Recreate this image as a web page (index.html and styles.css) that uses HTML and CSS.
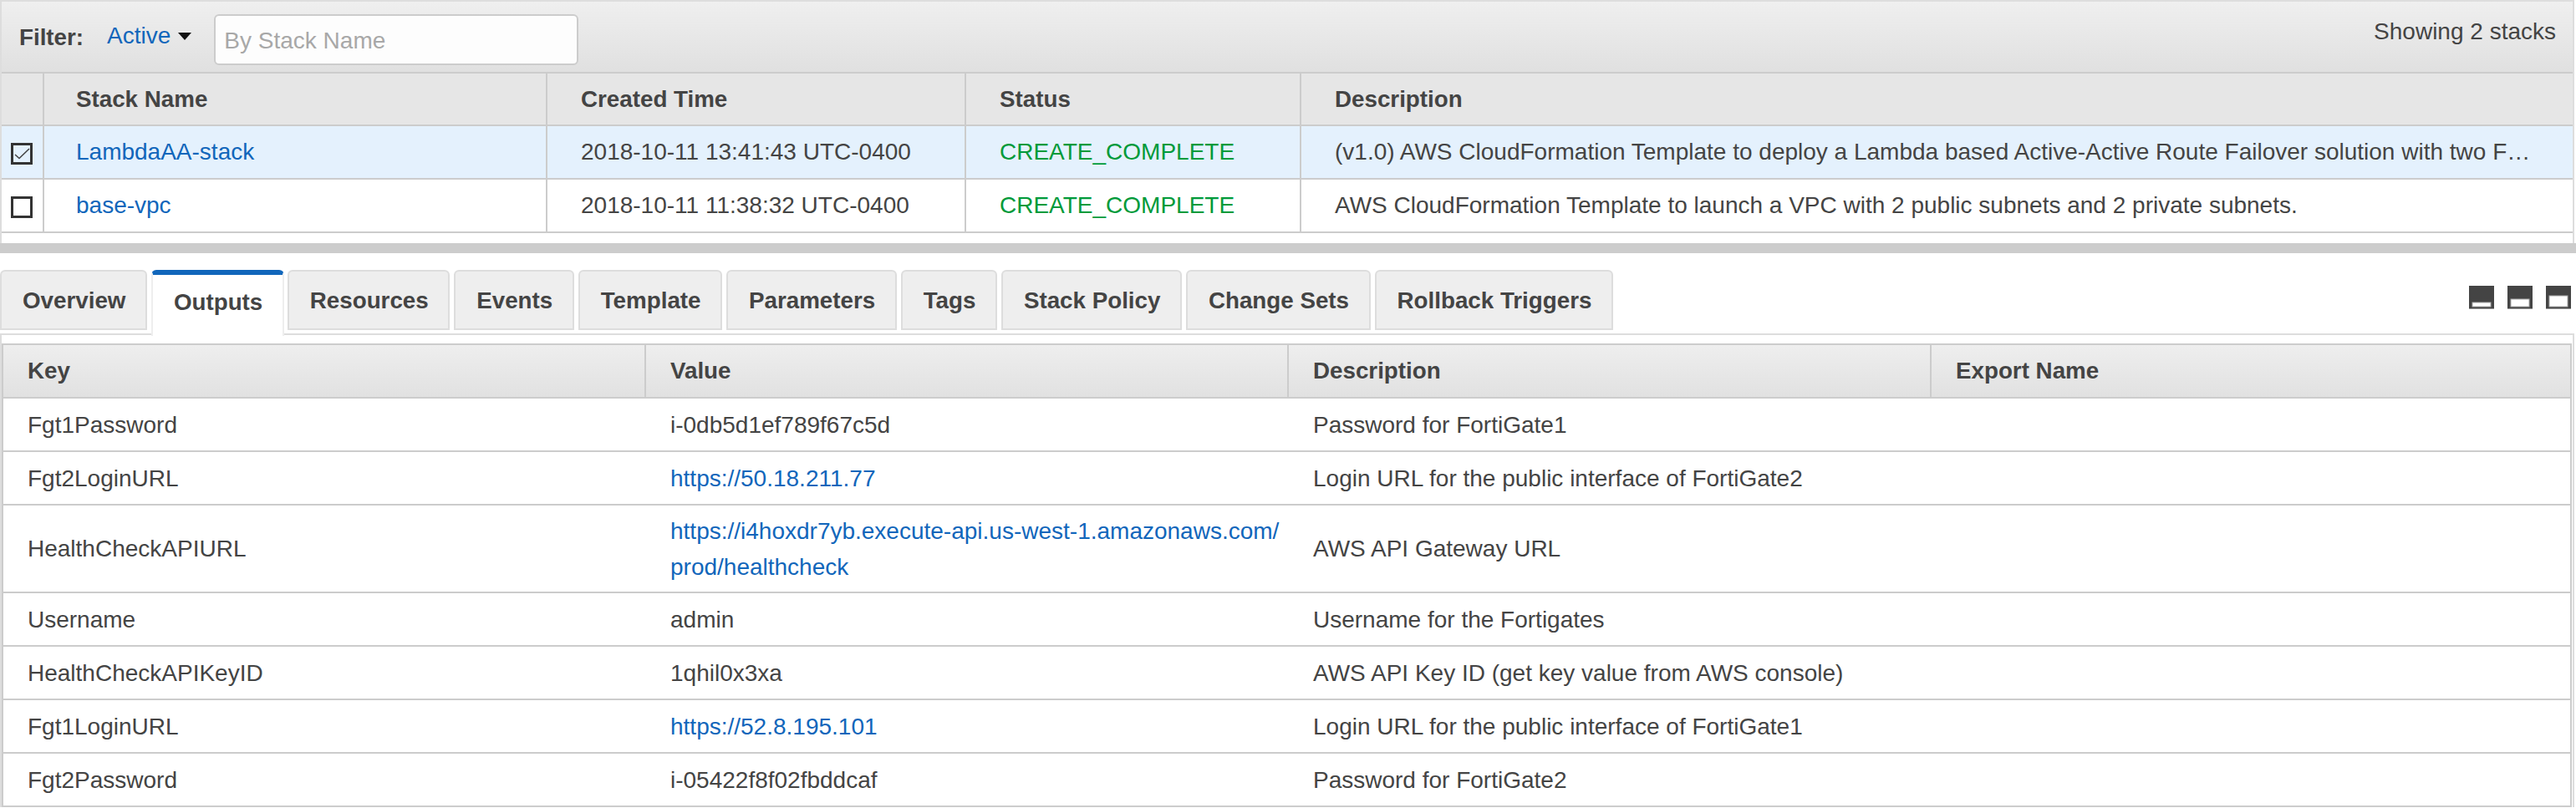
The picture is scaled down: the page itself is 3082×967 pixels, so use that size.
FILE: index.html
```html
<!DOCTYPE html>
<html>
<head>
<meta charset="utf-8" />
<title>Stacks</title>
<link rel="stylesheet" href="styles.css">
</head>
<body>

<div class="stacks">
  <div class="filter-bar">
    <span class="filter-label">Filter:</span>
    <a class="filter-select" href="#">Active<span class="caret"></span></a>
    <input class="filter-input" type="text" placeholder="By Stack Name">
    <span class="filter-count">Showing 2 stacks</span>
  </div>
  <table class="stack-table">
    <colgroup>
      <col class="c-check"><col class="c-name"><col class="c-time"><col class="c-status"><col>
    </colgroup>
    <thead>
      <tr><th></th><th class="name-cell">Stack Name</th><th>Created Time</th><th>Status</th><th>Description</th></tr>
    </thead>
    <tbody>
      <tr class="selected">
        <td class="check-cell">
          <span class="checkbox"><svg viewBox="0 0 20 20" width="20" height="20"><path d="M2 11 L7 15.5 L19 4" fill="none" stroke="#444" stroke-width="1.6"/></svg></span>
        </td>
        <td class="name-cell"><a href="#">LambdaAA-stack</a></td>
        <td>2018-10-11 13:41:43 UTC-0400</td>
        <td class="ok">CREATE_COMPLETE</td>
        <td>(v1.0) AWS CloudFormation Template to deploy a Lambda based Active-Active Route Failover solution with two FortiGate instances</td>
      </tr>
      <tr>
        <td class="check-cell"><span class="checkbox"></span></td>
        <td class="name-cell"><a href="#">base-vpc</a></td>
        <td>2018-10-11 11:38:32 UTC-0400</td>
        <td class="ok">CREATE_COMPLETE</td>
        <td>AWS CloudFormation Template to launch a VPC with 2 public subnets and 2 private subnets.</td>
      </tr>
    </tbody>
  </table>
</div>

<div class="splitter"></div>

<div class="tabs">
  <a class="tab" href="#">Overview</a>
  <a class="tab active" href="#">Outputs</a>
  <a class="tab" href="#">Resources</a>
  <a class="tab" href="#">Events</a>
  <a class="tab" href="#">Template</a>
  <a class="tab" href="#">Parameters</a>
  <a class="tab" href="#">Tags</a>
  <a class="tab" href="#">Stack Policy</a>
  <a class="tab" href="#">Change Sets</a>
  <a class="tab" href="#">Rollback Triggers</a>
  <div class="sizers">
    <svg class="sizer" viewBox="0 0 30 28" width="30" height="28"><rect width="30" height="27" fill="#444"/><rect y="27" width="30" height="1" fill="#999"/><rect x="4" y="20" width="22" height="5" fill="#fff" stroke="#aaa"/></svg>
    <svg class="sizer" viewBox="0 0 30 28" width="30" height="28"><rect width="30" height="27" fill="#444"/><rect y="27" width="30" height="1" fill="#999"/><rect x="4" y="16" width="22" height="9" fill="#fff" stroke="#aaa"/></svg>
    <svg class="sizer" viewBox="0 0 30 28" width="30" height="28"><rect width="30" height="27" fill="#444"/><rect y="27" width="30" height="1" fill="#999"/><rect x="4" y="12" width="22" height="13" fill="#fff" stroke="#aaa"/></svg>
  </div>
</div>

<div class="outputs">
  <table class="output-table">
    <colgroup>
      <col class="c-col"><col class="c-col"><col class="c-col"><col>
    </colgroup>
    <thead>
      <tr><th>Key</th><th>Value</th><th>Description</th><th>Export Name</th></tr>
    </thead>
    <tbody>
      <tr><td>Fgt1Password</td><td>i-0db5d1ef789f67c5d</td><td>Password for FortiGate1</td><td></td></tr>
      <tr><td>Fgt2LoginURL</td><td><a href="#">https://50.18.211.77</a></td><td>Login URL for the public interface of FortiGate2</td><td></td></tr>
      <tr><td>HealthCheckAPIURL</td><td><a href="#">https://i4hoxdr7yb.execute-api.us-west-1.amazonaws.com/<br>prod/healthcheck</a></td><td>AWS API Gateway URL</td><td></td></tr>
      <tr><td>Username</td><td>admin</td><td>Username for the Fortigates</td><td></td></tr>
      <tr><td>HealthCheckAPIKeyID</td><td>1qhil0x3xa</td><td>AWS API Key ID (get key value from AWS console)</td><td></td></tr>
      <tr><td>Fgt1LoginURL</td><td><a href="#">https://52.8.195.101</a></td><td>Login URL for the public interface of FortiGate1</td><td></td></tr>
      <tr><td>Fgt2Password</td><td>i-05422f8f02fbddcaf</td><td>Password for FortiGate2</td><td></td></tr>
    </tbody>
  </table>
</div>

</body>
</html>
```

FILE: styles.css
```css
html, body {
  margin: 0;
  height: 967px;
  overflow: hidden;
  background: #fff;
}
body {
  font-family: "Liberation Sans", Arial, sans-serif;
  font-size: 28px;
  color: #444;
}
a {
  color: #1166bb;
  text-decoration: none;
}

/* top panel */
.stacks {
  width: 3080px;
  box-sizing: border-box;
  border: 2px solid #ddd;
  border-bottom: 0;
  padding-bottom: 12px;
}
.filter-bar {
  height: 84px;
  box-sizing: content-box;
  display: flex;
  align-items: flex-start;
  background: linear-gradient(#efefef, #e0e0e0);
  border-bottom: 2px solid #ccc;
}
.filter-label {
  font-size: 27.75px;
  font-weight: bold;
  margin: 27px 0 0 21px;
}
.filter-select {
  margin: 25px 0 0 28px;
  display: flex;
}
.caret {
  width: 0;
  height: 0;
  margin: 12px 0 0 9px;
  border-left: 8px solid transparent;
  border-right: 8px solid transparent;
  border-top: 9px solid #111;
}
.filter-input {
  width: 436px;
  height: 61px;
  box-sizing: border-box;
  margin: 15px 0 0 27px;
  padding: 2px 0 0 10px;
  border: 2px solid #ccc;
  border-radius: 6px;
  background: #fdfdfd;
  font-family: inherit;
  font-size: 28px;
  color: #444;
}
.filter-input::placeholder {
  color: #a8a8a8;
}
.filter-count {
  margin: 20px 20px 0 auto;
}

table {
  width: 100%;
  table-layout: fixed;
  border-collapse: separate;
  border-spacing: 0;
}
th, td {
  box-sizing: border-box;
  padding: 0 40px;
  text-align: left;
  white-space: nowrap;
  overflow: hidden;
  text-overflow: ellipsis;
  border-right: 2px solid #ccc;
  border-bottom: 2px solid #ccc;
}
th {
  font-size: 27.75px;
}
th:last-child, td:last-child {
  border-right: 0;
}

.c-check { width: 51px; }
.c-name { width: 602px; }
.c-time { width: 501px; }
.c-status { width: 401px; }

.stack-table th {
  height: 63px;
  background: #e6e6e6;
}
.stack-table td {
  height: 64px;
}
.stack-table th:first-child, .check-cell {
  padding: 0;
}
.stack-table .name-cell {
  padding-left: 38px;
}
.selected td {
  background: #e4f1fd;
}
.ok {
  color: #009a3a;
}
.checkbox {
  display: block;
  width: 26px;
  height: 26px;
  box-sizing: border-box;
  margin: 3px 0 0 11px;
  border: 3px solid #333;
}
.checkbox svg {
  display: block;
}

.splitter {
  height: 12px;
  background: #ccc;
}

/* tabs */
.tabs {
  display: flex;
  align-items: flex-start;
  height: 78px;
  box-sizing: border-box;
  margin-top: 20px;
  width: 3080px;
  border-bottom: 2px solid #ddd;
}
.tab {
  height: 72px;
  box-sizing: border-box;
  padding: 19px 23.5px 0 25px;
  margin-right: 5px;
  background: #eee;
  border: 2px solid #ddd;
  border-radius: 6px 6px 0 0;
  color: #444;
  font-size: 27.75px;
  font-weight: bold;
}
.tab.active {
  position: relative;
  height: 79px;
  padding-top: 17px;
  margin-right: 4px;
  background: #fff;
  border-color: #eee;
  border-top: 6px solid #1166bb;
  border-bottom: 0;
}
.sizers {
  display: flex;
  gap: 16px;
  margin: 19px 4px 0 auto;
}
.sizer {
  display: block;
}

/* outputs */
.outputs {
  width: 3080px;
  box-sizing: border-box;
  padding: 10px 1px 0 0;
  border-left: 2px solid #ddd;
  border-right: 2px solid #ddd;
}
.output-table {
  box-sizing: border-box;
  border-top: 2px solid #ccc;
  border-left: 2px solid #ccc;
  border-right: 2px solid #ccc;
}
.output-table .c-col {
  width: 769px;
}
.output-table th, .output-table td {
  padding-left: 29px;
  padding-right: 8px;
}
.output-table th {
  height: 64px;
  background: linear-gradient(#eeeeee, #e1e1e1);
}
.output-table td {
  height: 64px;
  line-height: 42.5px;
  padding-top: 10px;
  padding-bottom: 8px;
  border-right: 0;
}
```
